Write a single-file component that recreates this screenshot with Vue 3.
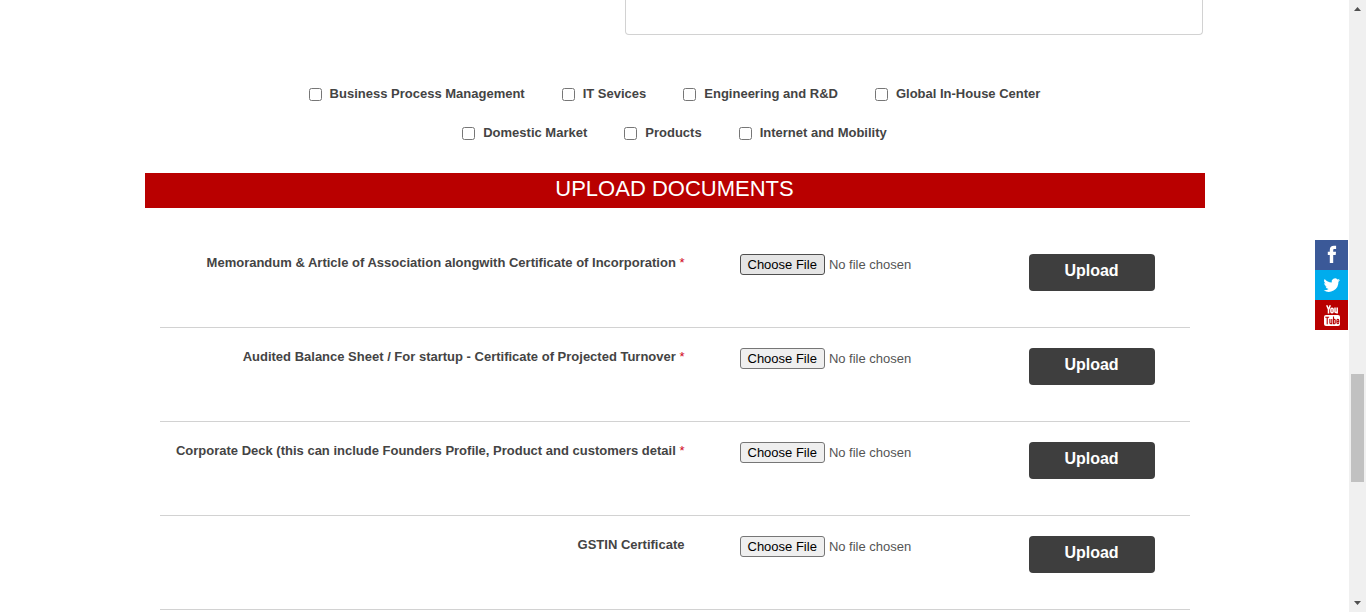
<script setup>
const sectorRows = [
  ['Business Process Management', 'IT Sevices', 'Engineering and R&D', 'Global In-House Center'],
  ['Domestic Market', 'Products', 'Internet and Mobility'],
]

const documents = [
  { id: 'memorandum', label: 'Memorandum & Article of Association alongwith Certificate of Incorporation', required: true, active: true },
  { id: 'balance-sheet', label: 'Audited Balance Sheet / For startup - Certificate of Projected Turnover', required: true },
  { id: 'corporate-deck', label: 'Corporate Deck (this can include Founders Profile, Product and customers detail', required: true },
  { id: 'gstin', label: 'GSTIN Certificate', required: false },
]
</script>

<template>
  <div class="viewport">
    <div class="page">
      <main class="container">
        <div class="details">
          <textarea class="notes" aria-label="Company details"></textarea>
        </div>

        <div class="sectors">
          <div v-for="(row, i) in sectorRows" :key="i" class="sector-row">
            <label v-for="name in row" :key="name" class="sector">
              <input type="checkbox" :value="name" />
              <span>{{ name }}</span>
            </label>
          </div>
        </div>

        <h2 class="title">UPLOAD DOCUMENTS</h2>

        <form class="documents" @submit.prevent>
          <div v-for="doc in documents" :key="doc.id" class="document">
            <label class="document-label" :for="doc.id">{{ doc.label }}<span v-if="doc.required" class="required"> *</span></label>
            <input :id="doc.id" type="file" class="file" :class="{ active: doc.active }" />
            <button type="button" class="upload">Upload</button>
          </div>
        </form>
      </main>

      <nav class="social" aria-label="Social links">
        <a href="#" class="facebook" aria-label="Facebook">
          <svg viewBox="0 0 33 30" width="33" height="30">
            <path fill="#fff" d="M14.800 23v-8h-2v-3.200h2V10c0-2.800 1.500-4.200 4.200-4.200h2.100v3.200h-1.500c-1 0-1.400.4-1.400 1.300v1.500H21l-.3 3.200h-2.500v8z" />
          </svg>
        </a>
        <a href="#" class="twitter" aria-label="Twitter">
          <svg viewBox="0 0 33 30" width="33" height="30">
            <path fill="#fff" transform="translate(8 6.500) scale(.72)" d="M23.600 4.900c-.8.4-1.700.6-2.600.7.900-.6 1.700-1.500 2-2.600-.9.500-1.900.9-2.900 1.100a4.700 4.700 0 0 0-8 4.300C8.200 8.200 4.700 6.300 2.300 3.400a4.700 4.700 0 0 0 1.500 6.300c-.8 0-1.500-.2-2.100-.6 0 2.300 1.600 4.300 3.800 4.700-.7.200-1.400.2-2.100.1a4.700 4.700 0 0 0 4.400 3.300A9.500 9.500 0 0 1 .8 19.100a13.400 13.400 0 0 0 20.600-11.900c.9-.6 1.600-1.400 2.200-2.300z" />
          </svg>
        </a>
        <a href="#" class="youtube" aria-label="YouTube">
          <svg viewBox="0 0 33 30" width="33" height="30">
            <g fill="none" stroke="#fff" stroke-width="1.500">
              <path d="M11.700 5.300l1.900 4.200 1.700-4.200M13.500 9.200v4.300" />
              <rect x="15.900" y="8.200" width="2.200" height="4.500" rx="1" />
              <path d="M20 7.500v4.500q1.100 1.200 2.200-.2M22.200 7.500v6" />
            </g>
            <rect x="9" y="15" width="16" height="11" rx="2" fill="#fff" />
            <g fill="none" stroke="#b90000" stroke-width="1.100">
              <path d="M10.300 17.200h3.800M12.200 17.200v7.100" />
              <path d="M14.900 19v4.200q.9 1 1.900-.1M16.800 19v5.300" />
              <path d="M18.500 16.500v7.800M18.500 19.800q1.700-1 1.700.4v2.600q0 1.400-1.700.6" />
              <path d="M21.900 21.600h1.900v-1q0-1.200-.95-1.200t-.95 1.200v2q0 1.200.95 1.200t.95-1.200" />
            </g>
          </svg>
        </a>
      </nav>
    </div>

    <div class="scrollbar" aria-hidden="true">
      <svg viewBox="0 0 17 17" width="17" height="17"><path fill="#505050" d="M5 11h7L8.500 7z" /></svg>
      <div class="track"><div class="thumb"></div></div>
      <svg viewBox="0 0 17 17" width="17" height="17"><path fill="#505050" d="M5 6h7l-3.500 4z" /></svg>
    </div>
  </div>
</template>

<style>
body {
  margin: 0;
  background: #fff;
}
</style>

<style scoped>
* {
  box-sizing: border-box;
}

.viewport {
  display: flex;
  height: 100vh;
  overflow: hidden;
  font-family: "Liberation Sans", Arial, sans-serif;
  font-size: 13px;
  line-height: 20px;
  color: #444;
}

.page {
  position: relative;
  flex: 1;
  min-width: 0;
  overflow: hidden;
}

.container {
  max-width: 1060px;
  margin: 0 auto;
}

.details {
  display: flex;
  justify-content: flex-end;
  padding-right: 2px;
}

.notes {
  display: block;
  width: 578px;
  max-width: 100%;
  height: 35px;
  border: 1px solid #d2d2d2;
  border-top: 0;
  border-radius: 0 0 4px 4px;
  resize: none;
  outline: 0;
}

.sectors {
  display: grid;
  gap: 19px;
  padding: 49px 0 30px;
}

.sector-row {
  display: flex;
  justify-content: center;
  gap: 37px;
}

.sector {
  display: flex;
  gap: 8px;
  font-weight: bold;
}

.sector input {
  width: 13px;
  height: 13px;
  margin: 4px 0 0;
}

.title {
  height: 35px;
  margin: 0;
  background: #b90000;
  color: #fff;
  font-size: 22px;
  font-weight: normal;
  line-height: 31px;
  text-align: center;
}

.documents {
  padding: 26px 15px 0;
}

.document {
  display: grid;
  grid-template-columns: minmax(0, 1fr) 234px 126px;
  column-gap: 55px;
  align-items: start;
  padding: 20px 35px 36px 0;
  border-bottom: 1px solid #d2d2d2;
}

.document-label {
  line-height: 18px;
  font-weight: bold;
  text-align: right;
}

.required {
  color: #d0021b;
  font-weight: normal;
}

.file {
  width: 100%;
  height: 21px;
  font: 13px "Liberation Sans", Arial, sans-serif;
  color: #555;
}

.file::file-selector-button {
  height: 21px;
  margin: 0 4px 0 0;
  padding: 1px 7px;
  border: 1px solid #767676;
  border-radius: 3px;
  background: #efefef;
  color: #000;
  font: inherit;
}

.file.active::file-selector-button {
  border-color: #4f4f4f;
  background: #e5e5e5;
}

.upload {
  height: 37px;
  padding: 0 0 3px;
  border: 0;
  border-radius: 4px;
  background: #3e3e3e;
  color: #fff;
  font: bold 16px "Liberation Sans", Arial, sans-serif;
}

.social {
  position: absolute;
  top: 240px;
  right: 1px;
  width: 33px;
}

.social a,
.social svg {
  display: block;
}

.facebook {
  background: #3b5998;
}

.twitter {
  background: #00aced;
}

.youtube {
  background: #b90000;
}

.scrollbar {
  display: flex;
  flex-direction: column;
  flex: none;
  width: 17px;
  background: #f0f0f0;
}

.track {
  flex: 1;
  display: grid;
  grid-template-rows: 357fr 108fr 113fr;
  padding: 0 2px;
}

.thumb {
  grid-row: 2;
  background: #c1c1c1;
}
</style>
